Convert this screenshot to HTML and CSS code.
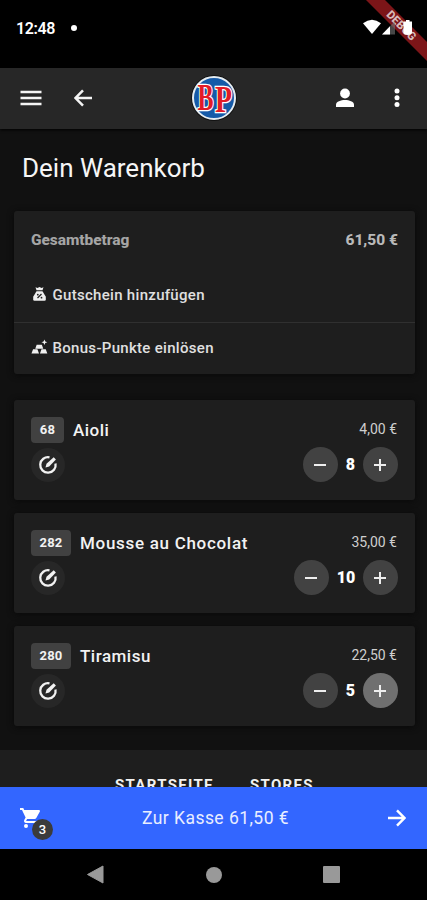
FILE: index.html
```html
<!DOCTYPE html>
<html lang="de">
<head>
<meta charset="utf-8">
<meta name="viewport" content="width=device-width, initial-scale=1">
<title>Dein Warenkorb</title>
<link rel="stylesheet" href="styles.css">
</head>
<body>
<div class="screen">
  <div class="status">
    <span class="clock">12:48</span><span class="dot"></span>
    <svg class="ribbon" width="64" height="64" viewBox="0 0 64 64">
      <path d="M3 0h19l42 42v19z" fill="#7c1518"/>
      <text transform="translate(38.500 25.500) rotate(45)" text-anchor="middle" y="4" class="ribbon-text">DEBUG</text>
    </svg>
    <svg class="signals" width="54" height="18" viewBox="0 0 54 18">
      <path d="M0 4.300Q9-2.700 18 4.300L9 15z" fill="#fff"/>
      <path d="M32 2v13.500H19z" fill="#777" fill-opacity=".6"/>
      <path d="M27 7.200v8.300h-8z" fill="#fff"/>
      <path d="M43 1h3.500v1.500H49V13q0 3-4.500 3T40.500 13V2.500H43z" fill="#fff"/>
    </svg>
  </div>

  <header class="topbar">
    <svg class="menu" width="22" height="16" viewBox="0 0 22 16"><path d="M.5 2h21M.5 8h21M.5 14h21" stroke="#f4f4f4" stroke-width="2.400"/></svg>
    <svg class="back" width="18" height="18" viewBox="0 0 18 18"><path d="M18 9H1.500M9 1.300 1.500 9 9 16.700" fill="none" stroke="#f4f4f4" stroke-width="2.500"/></svg>
    <svg class="logo" width="46" height="46" viewBox="0 0 46 46">
      <circle cx="23" cy="23" r="22.900" fill="#111"/>
      <circle cx="23" cy="23" r="21" fill="#155aa8" stroke="#e4ecf2" stroke-width="2"/>
      <text class="logo-text" x="6.500" y="34.500" textLength="16" lengthAdjust="spacingAndGlyphs">B</text>
      <text class="logo-text" x="24" y="36.500" textLength="17" lengthAdjust="spacingAndGlyphs">P</text>
    </svg>
    <svg class="person" width="20" height="20" viewBox="0 0 20 20" fill="#fff"><circle cx="10" cy="5.500" r="4.900"/><path d="M1 19v-2.500C1 13.500 6 12 10 12s9 1.500 9 4.500V19z"/></svg>
    <svg class="more" width="6" height="20" viewBox="0 0 6 20" fill="#fff"><circle cx="3" cy="3" r="2.500"/><circle cx="3" cy="9.700" r="2.500"/><circle cx="3" cy="16.400" r="2.500"/></svg>
  </header>

  <main class="content">
    <h1>Dein Warenkorb</h1>
    <section class="card summary">
      <div class="total"><span class="total-label">Gesamtbetrag</span><span class="total-sum">61,50 €</span></div>
      <div class="option voucher">
        <svg width="16" height="16" viewBox="0 0 16 16"><path d="M4 1.200 6 2l2-1 2 1 2-.8-1 3H5z" fill="#f0f0f0"/><path d="M5 5.300h6l3.300 5.500v2.700q0 1.200-1.300 1.200H3q-1.300 0-1.300-1.200v-2.700z" fill="#f0f0f0"/><path d="m6 12 4-4" stroke="#222" stroke-width="1.200"/><circle cx="6.300" cy="8.700" r=".9" fill="#222"/><circle cx="10" cy="11.700" r=".9" fill="#222"/></svg>
        <span>Gutschein hinzufügen</span>
      </div>
      <div class="option bonus">
        <svg width="18" height="16" viewBox="0 0 18 16" fill="#f0f0f0"><path d="m.5 15 1.700-4.500h4.600L8.500 15zM9.500 15l1.600-4.500h4.500l1.700 4.500zM4.500 9.800 6 5.500h5.500l1.500 4.300zM14.200 0l.9 2.200 2.200.8-2.200.8-.9 2.200-.9-2.200L11 3l2.300-.8z"/></svg>
        <span>Bonus-Punkte einlösen</span>
      </div>
    </section>

    <article class="card item">
      <div class="row"><span class="number short">68</span><span class="name">Aioli</span><span class="price">4,00 €</span></div>
      <div class="row controls">
        <span class="edit"><svg width="20" height="20" viewBox="0 0 20 20"><path d="M11.500 2.400A7.700 7.700 0 1 0 17.500 8.500" fill="none" stroke="#f2f2f2" stroke-width="2.300"/><path d="m7.500 12.500 1-3.700 7.200-6.500 2.200 2.200L11.200 11.500z" fill="#f2f2f2"/></svg></span>
        <span class="circle"><svg width="12" height="12"><path d="M0 6h12" stroke="#eee" stroke-width="2"/></svg></span><b class="qty">8</b><span class="circle"><svg width="12" height="12"><path d="M0 6h12M6 0v12" stroke="#eee" stroke-width="2"/></svg></span>
      </div>
    </article>
    <article class="card item">
      <div class="row"><span class="number">282</span><span class="name mousse">Mousse au Chocolat</span><span class="price">35,00 €</span></div>
      <div class="row controls">
        <span class="edit"><svg width="20" height="20" viewBox="0 0 20 20"><path d="M11.500 2.400A7.700 7.700 0 1 0 17.500 8.500" fill="none" stroke="#f2f2f2" stroke-width="2.300"/><path d="m7.500 12.500 1-3.700 7.200-6.500 2.200 2.200L11.200 11.500z" fill="#f2f2f2"/></svg></span>
        <span class="circle"><svg width="12" height="12"><path d="M0 6h12" stroke="#eee" stroke-width="2"/></svg></span><b class="qty wide">10</b><span class="circle"><svg width="12" height="12"><path d="M0 6h12M6 0v12" stroke="#eee" stroke-width="2"/></svg></span>
      </div>
    </article>
    <article class="card item">
      <div class="row"><span class="number">280</span><span class="name">Tiramisu</span><span class="price">22,50 €</span></div>
      <div class="row controls">
        <span class="edit"><svg width="20" height="20" viewBox="0 0 20 20"><path d="M11.500 2.400A7.700 7.700 0 1 0 17.500 8.500" fill="none" stroke="#f2f2f2" stroke-width="2.300"/><path d="m7.500 12.500 1-3.700 7.200-6.500 2.200 2.200L11.200 11.500z" fill="#f2f2f2"/></svg></span>
        <span class="circle"><svg width="12" height="12"><path d="M0 6h12" stroke="#eee" stroke-width="2"/></svg></span><b class="qty">5</b><span class="circle pressed"><svg width="12" height="12"><path d="M0 6h12M6 0v12" stroke="#eee" stroke-width="2"/></svg></span>
      </div>
    </article>
  </main>

  <div class="links"><span class="home">STARTSEITE</span><span>STORES</span></div>

  <div class="checkout">
    <div class="cart">
      <svg width="24" height="24" viewBox="0 0 24 24" fill="#fff"><path d="M7 18a2 2 0 1 0 0 4 2 2 0 0 0 0-4M1 2v2h2l3.600 7.600-1.350 2.450C4.500 15.400 5.500 17 7 17h12v-2H7.420a.25.25 0 0 1-.25-.25L8.100 13h7.450c.75 0 1.410-.41 1.750-1.030L20.880 5.500A1 1 0 0 0 20 4H5.210L4.270 2zM17 18a2 2 0 1 0 0 4 2 2 0 0 0 0-4"/></svg>
      <span class="badge">3</span>
    </div>
    <span class="pay">Zur Kasse 61,50 €</span>
    <svg class="go" width="18" height="18" viewBox="0 0 18 18"><path d="M0 9h16.500M9 1.300 16.500 9 9 16.700" fill="none" stroke="#fff" stroke-width="2.400"/></svg>
  </div>

  <nav class="system">
    <svg width="18" height="20" viewBox="0 0 18 20"><path d="M1.500 9.500 17 1v17z" fill="#999" stroke="#999" stroke-linejoin="round"/></svg>
    <svg width="16" height="16" viewBox="0 0 16 16"><circle cx="8" cy="8" r="8" fill="#999"/></svg>
    <svg width="17" height="17" viewBox="0 0 17 17"><rect width="17" height="17" rx="1" fill="#999"/></svg>
  </nav>
</div>
</body>
</html>
```
FILE: styles.css
```css
* { box-sizing: border-box; }
body {
  margin: 0;
  background: #000;
  color: #f2f2f2;
  font-family: Roboto, "Liberation Sans", sans-serif;
}
svg { display: block; flex: none; }
.screen {
  display: flex;
  flex-direction: column;
  width: 427px;
  height: 900px;
  overflow: hidden;
}
.status {
  position: relative;
  display: flex;
  flex: none;
  align-items: center;
  height: 68px;
  padding: 0 14px 13px 16px;
}
.clock { padding-top: 1px; font-size: 16px; font-weight: 600; letter-spacing: -0.4px; color: #fff; width: 39px; white-space: nowrap; }
.dot { width: 6px; height: 6px; margin-left: 16px; border-radius: 50%; background: #fff; }
.ribbon { position: absolute; top: 0; right: 0; }
.ribbon-text { font-size: 11.5px; font-weight: 800; fill: #d8bcbc; }
.signals { position: absolute; top: 19px; left: 363px; }

.topbar {
  display: flex;
  flex: none;
  align-items: center;
  height: 61px;
  padding: 0 27px 1px 20px;
  background: #272727;
  box-shadow: 0 1px 3px #000;
  z-index: 1;
}
.back { margin-left: 32px; }
.logo { margin-left: 99px; }
.logo-text {
  font: bold 37px "Liberation Serif", serif;
  fill: #e21b27;
  stroke: #fff;
  stroke-width: 2.6px;
  paint-order: stroke;
}
.person { margin-left: 98px; }
.more { margin-left: auto; }

.content {
  flex: none;
  height: 621px;
  padding: 0 12px 0 14px;
  background: #111;
}
h1 {
  height: 82px;
  margin: 0;
  padding: 20px 0 0 8px;
  font-size: 26px;
  line-height: 38px;
  font-weight: 400;
  color: #f6f6f6;
}
.card { background: #1e1e1e; border-radius: 3px; box-shadow: 0 1px 6px #090909; }
.summary { height: 163px; margin-bottom: 26px; }
.total {
  display: flex;
  align-items: center;
  justify-content: space-between;
  height: 58px;
  padding: 0 17px 1px;
  color: #b9b9b9;
  font-size: 15.5px;
  font-weight: 800;
}
.total-label { color: #a5a5a5; letter-spacing: -0.05px; }
.option {
  display: flex;
  align-items: center;
  height: 53px;
  padding: 0 0 1px 17px;
  font-size: 15px;
  font-weight: 500;
  letter-spacing: 0.3px;
  color: #e0e0e0;
}
.option svg { width: 17px; margin: -2px 4.5px 0 0; }
.bonus { height: 52px; border-top: 1px solid #303030; padding-bottom: 1px; }

.item { height: 100px; margin-bottom: 13px; padding: 17px 17px 0; }
.row { display: flex; align-items: center; height: 26px; }
.number {
  width: 40px;
  border-radius: 4px;
  background: #414141;
  font-size: 13px;
  line-height: 26px;
  font-weight: 700;
  letter-spacing: 0.2px;
  text-align: center;
}
.short { width: 33px; }
.name { margin-left: 9px; font-size: 17px; font-weight: 500; letter-spacing: 0.5px; }
.mousse { letter-spacing: 0.7px; }
.price { margin: -3px 1px 0 auto; font-size: 14px; color: #cfcfcf; }
.controls { height: 35px; margin-top: 4px; }
.edit {
  display: grid;
  place-items: center;
  width: 34px;
  height: 34px;
  margin-right: auto;
  border-radius: 50%;
  background: #272727;
}
.circle {
  display: grid;
  place-items: center;
  width: 35px;
  height: 35px;
  border-radius: 50%;
  background: #424242;
}
.circle svg { margin-right: 1px; }
.pressed { background: #707070; }
.qty { width: 25px; text-align: center; font-size: 16px; font-weight: 900; color: #fff; padding-bottom: 1px; }
.wide { width: 34px; }

.links {
  display: flex;
  flex: none;
  height: 37px;
  padding: 26px 0 0 115px;
  background: #1e1e1e;
  overflow: hidden;
  font-size: 15px;
  line-height: 18px;
  font-weight: 700;
  letter-spacing: 1.3px;
}
.home { width: 135px; }
.checkout {
  display: flex;
  flex: none;
  align-items: center;
  justify-content: space-between;
  height: 62px;
  padding: 0 21px 1px 19px;
  background: #3366ff;
}
.cart { position: relative; }
.badge {
  position: absolute;
  left: 13px;
  top: 13px;
  width: 21px;
  height: 21px;
  border-radius: 50%;
  background: #3b3b3b;
  color: #fff;
  font-size: 13px;
  line-height: 21px;
  font-weight: 500;
  text-align: center;
}
.pay { font-size: 17.5px; letter-spacing: 0.45px; color: #e9eeff; }
.system {
  display: flex;
  flex: none;
  align-items: center;
  justify-content: space-between;
  height: 51px;
  padding: 0 87px 0 86px;
  background: #000;
}
```
